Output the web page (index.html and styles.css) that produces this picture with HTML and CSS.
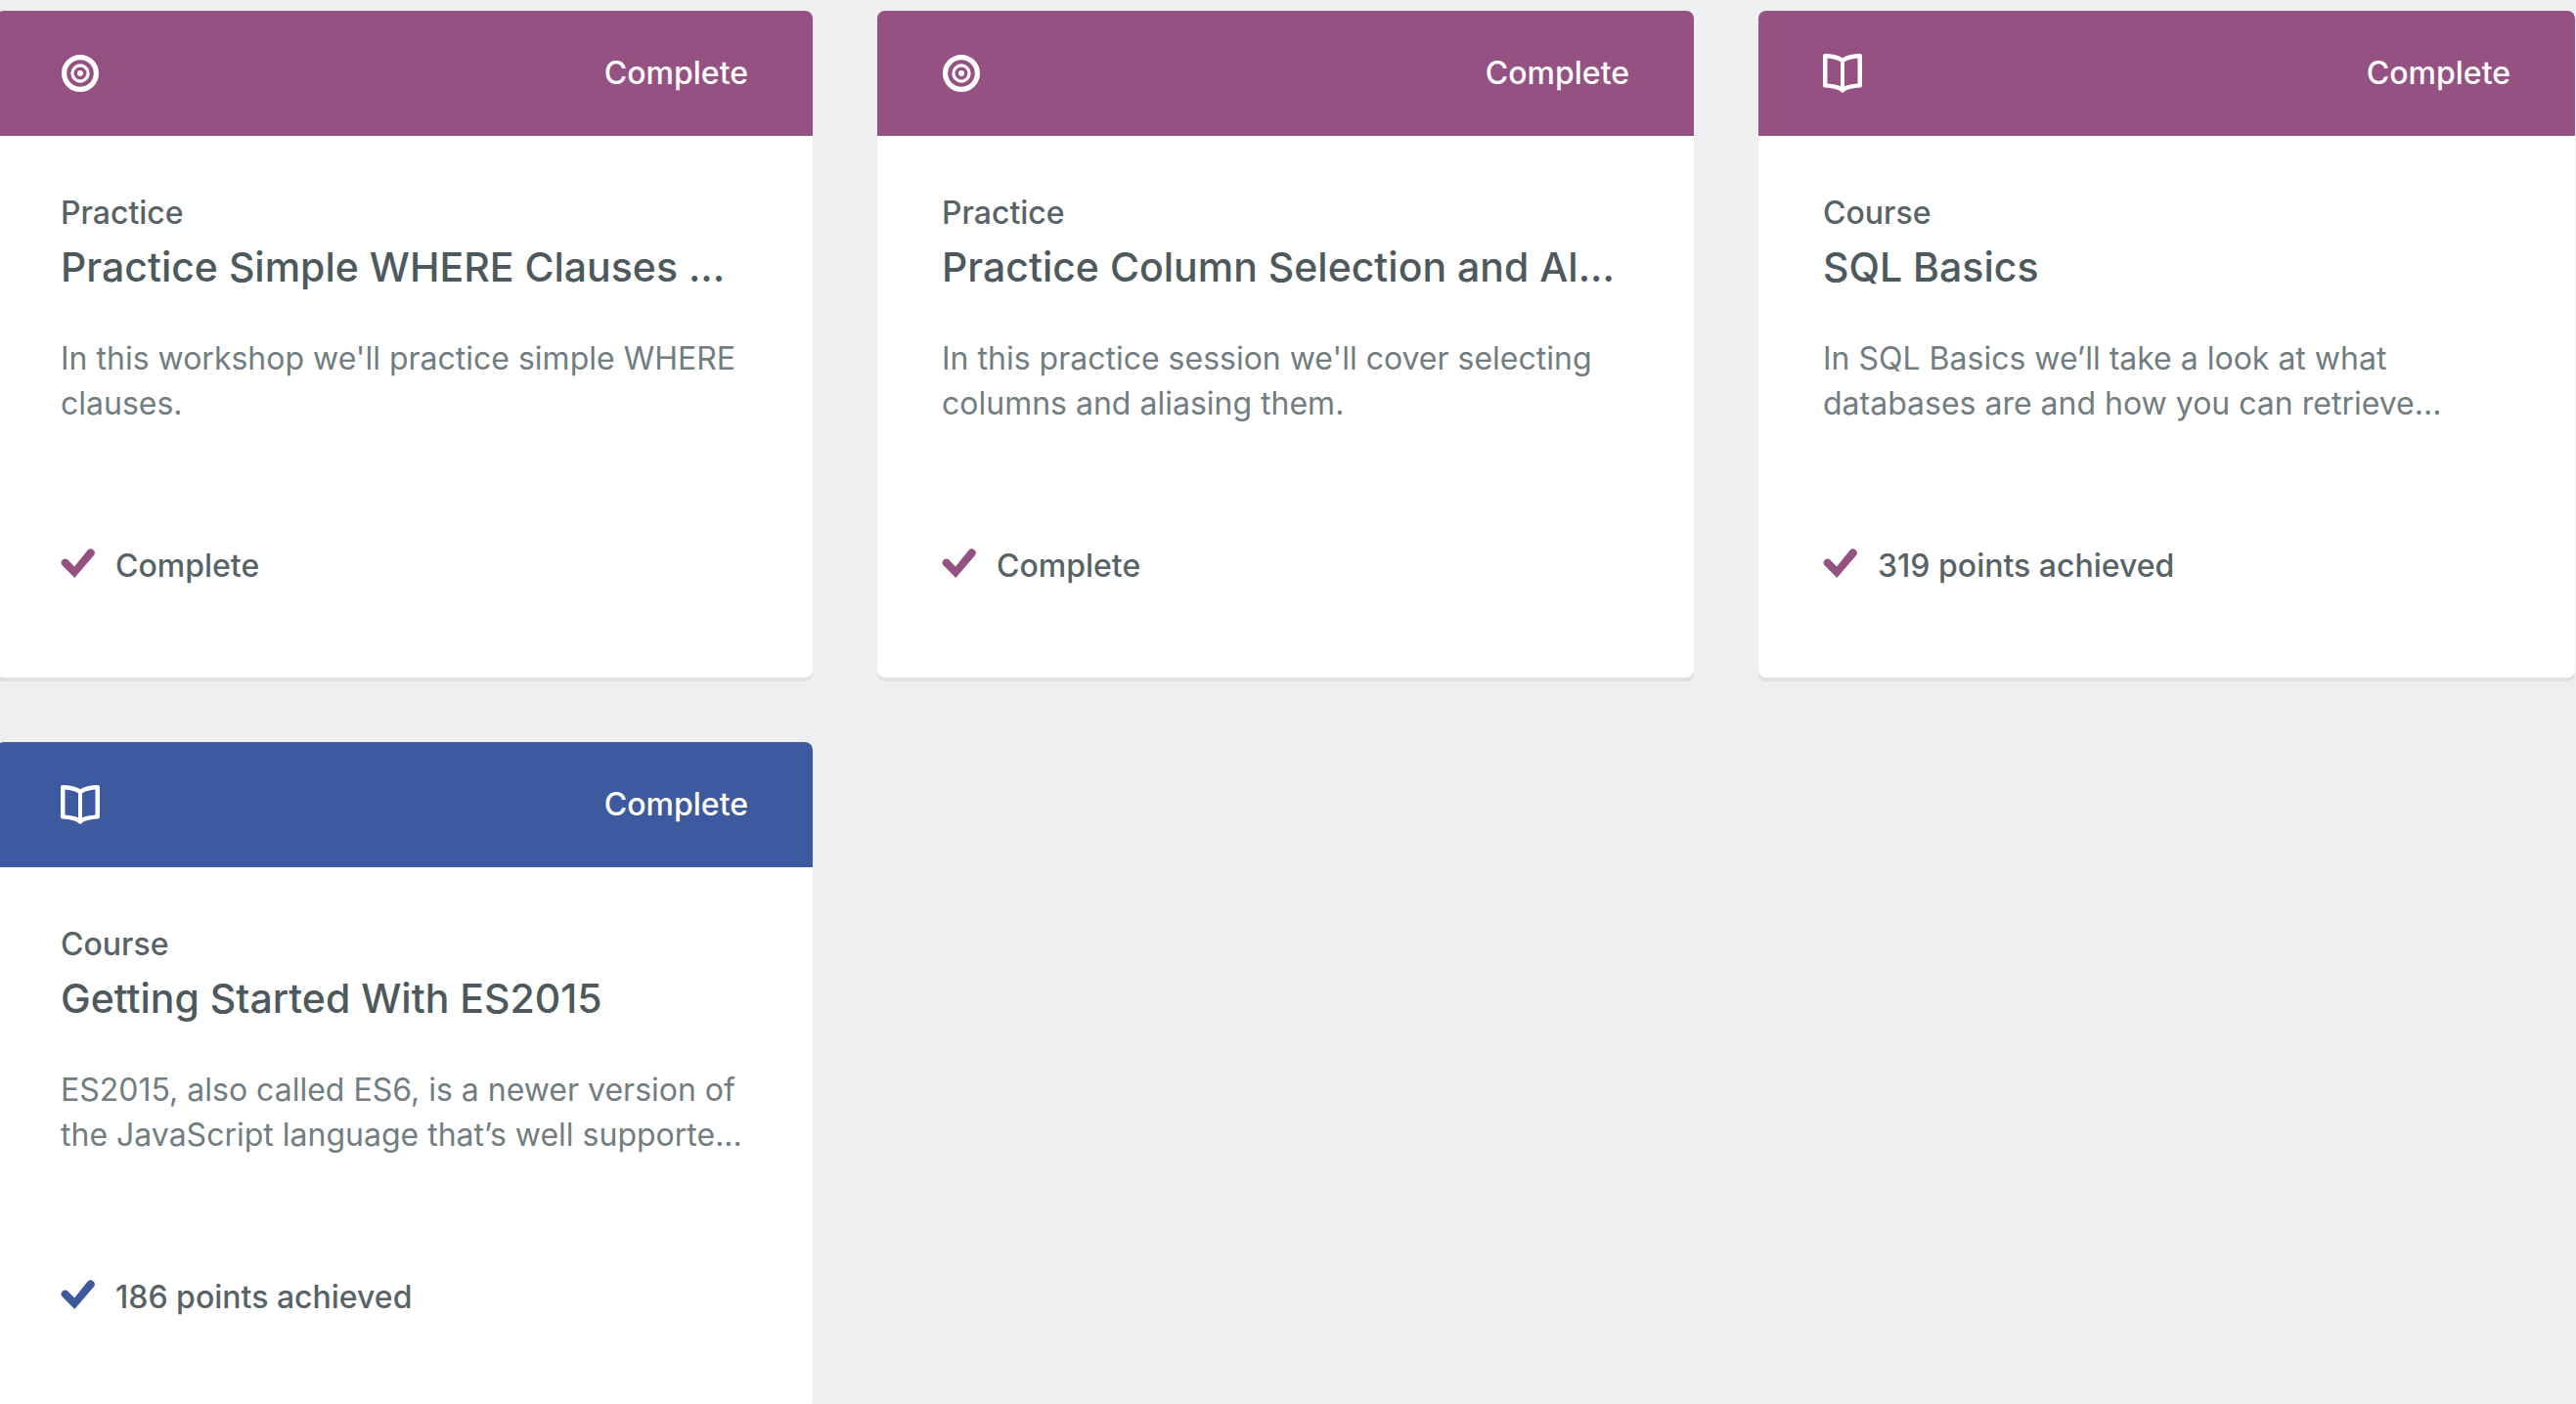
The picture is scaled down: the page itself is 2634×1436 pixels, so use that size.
FILE: index.html
```html
<!DOCTYPE html>
<html lang="en">
<head>
<meta charset="utf-8">
<title>Completed Library Items</title>
<link rel="stylesheet" href="styles.css">
</head>
<body>
<svg class="sprite" aria-hidden="true">
  <symbol id="icon-practice" viewBox="0 0 40 40">
    <circle cx="20" cy="20" r="16.4" fill="none" stroke="currentColor" stroke-width="5.2"/>
    <circle cx="20" cy="20" r="8.1" fill="none" stroke="currentColor" stroke-width="3.2"/>
    <circle cx="20" cy="20" r="3" fill="currentColor"/>
  </symbol>
  <symbol id="icon-course" viewBox="0 0 40 40">
    <path fill="currentColor" fill-rule="evenodd" d="M2 0C9 .3 15 1.200 20 4.200C25 1.200 31 .3 38 0Q40 0 40 2V32.500Q40 34.400 38 34.600C30 35.300 24.500 36.300 22 38.500Q20 41 18 38.500C15.500 36.300 10 35.300 2 34.600Q0 34.400 0 32.500V2Q0 0 2 0ZM4.500 4.500V30.400C10 30.800 14.500 31.600 18 33.300V8.200C14.500 6 10 4.900 4.500 4.500ZM35.500 4.500C30 4.900 25.500 6 22 8.200V33.300C25.500 31.600 30 30.800 35.500 30.400Z"/>
  </symbol>
  <symbol id="icon-check" viewBox="0 0 36 36">
    <path fill="currentColor" d="M14.300 30L1.200 16.800A4.100 4.100 0 0 1 7 11.300L14.100 18.500L27.600 1.700A4.200 4.200 0 0 1 34.200 6.800Z"/>
  </symbol>
</svg>
<main class="cards">
  <article class="card databases">
    <header class="card-header">
      <svg class="icon-type" aria-hidden="true"><use href="#icon-practice"/></svg>
      <span>Complete</span>
    </header>
    <div class="card-body">
      <p class="card-type">Practice</p>
      <h2 class="card-title"><a href="#">Practice Simple WHERE Clauses ...</a></h2>
      <p class="card-description">In this workshop we'll practice simple WHERE<br>clauses.</p>
      <p class="card-progress"><svg class="icon-check" aria-hidden="true"><use href="#icon-check"/></svg>Complete</p>
    </div>
  </article>
  <article class="card databases">
    <header class="card-header">
      <svg class="icon-type" aria-hidden="true"><use href="#icon-practice"/></svg>
      <span>Complete</span>
    </header>
    <div class="card-body">
      <p class="card-type">Practice</p>
      <h2 class="card-title"><a href="#">Practice Column Selection and Al...</a></h2>
      <p class="card-description">In this practice session we'll cover selecting<br>columns and aliasing them.</p>
      <p class="card-progress"><svg class="icon-check" aria-hidden="true"><use href="#icon-check"/></svg>Complete</p>
    </div>
  </article>
  <article class="card databases">
    <header class="card-header">
      <svg class="icon-type" aria-hidden="true"><use href="#icon-course"/></svg>
      <span>Complete</span>
    </header>
    <div class="card-body">
      <p class="card-type">Course</p>
      <h2 class="card-title"><a href="#">SQL Basics</a></h2>
      <p class="card-description">In SQL Basics we’ll take a look at what<br>databases are and how you can retrieve...</p>
      <p class="card-progress"><svg class="icon-check" aria-hidden="true"><use href="#icon-check"/></svg>319 points achieved</p>
    </div>
  </article>
  <article class="card javascript">
    <header class="card-header">
      <svg class="icon-type" aria-hidden="true"><use href="#icon-course"/></svg>
      <span>Complete</span>
    </header>
    <div class="card-body">
      <p class="card-type">Course</p>
      <h2 class="card-title"><a href="#">Getting Started With ES2015</a></h2>
      <p class="card-description">ES2015, also called ES6, is a newer version of<br>the JavaScript language that’s well supporte...</p>
      <p class="card-progress"><svg class="icon-check" aria-hidden="true"><use href="#icon-check"/></svg>186 points achieved</p>
    </div>
  </article>
</main>
</body>
</html>
```
FILE: styles.css
```css
html {
  height: 100%;
  overflow: hidden;
}

body {
  height: 100%;
  margin: 0;
  overflow: hidden;
  background: #edeff0;
  color: #576366;
  font-family: Inter, "Liberation Sans", sans-serif;
  font-size: 32px;
  font-weight: 500;
  line-height: 40px;
}

.sprite {
  display: none;
}

.cards {
  display: grid;
  grid-template-columns: repeat(3, minmax(0, 1fr));
  gap: 66px;
  margin: 0 1px 0 -4px;
  padding: 11px 0;
}

.card {
  border-radius: 8px;
  background: #fff;
  box-shadow: 0 4px 0 rgba(0, 0, 0, 0.06);
}

.databases {
  --topic: #955182;
}

.javascript {
  --topic: #3d5a9e;
}

.card-header {
  display: flex;
  align-items: center;
  justify-content: space-between;
  padding: 44px 66px;
  border-radius: 8px 8px 0 0;
  background: var(--topic);
  color: #fff;
}

.icon-type {
  width: 40px;
  height: 40px;
}

.card-body {
  padding: 59px 66px 94px;
}

.card-type,
.card-title,
.card-description,
.card-progress {
  margin: 0;
  white-space: nowrap;
}

.card-title {
  color: #4d595c;
  font-size: 41px;
  font-weight: 500;
  line-height: 70px;
}

.card-title a {
  color: inherit;
  text-decoration: none;
}

.card-description {
  margin: 36px 0 123px;
  color: #717d80;
  font-weight: 400;
  line-height: 46px;
}

.card-progress {
  display: flex;
  align-items: center;
  gap: 20px;
}

.icon-check {
  width: 36px;
  height: 36px;
  color: var(--topic);
}
```
